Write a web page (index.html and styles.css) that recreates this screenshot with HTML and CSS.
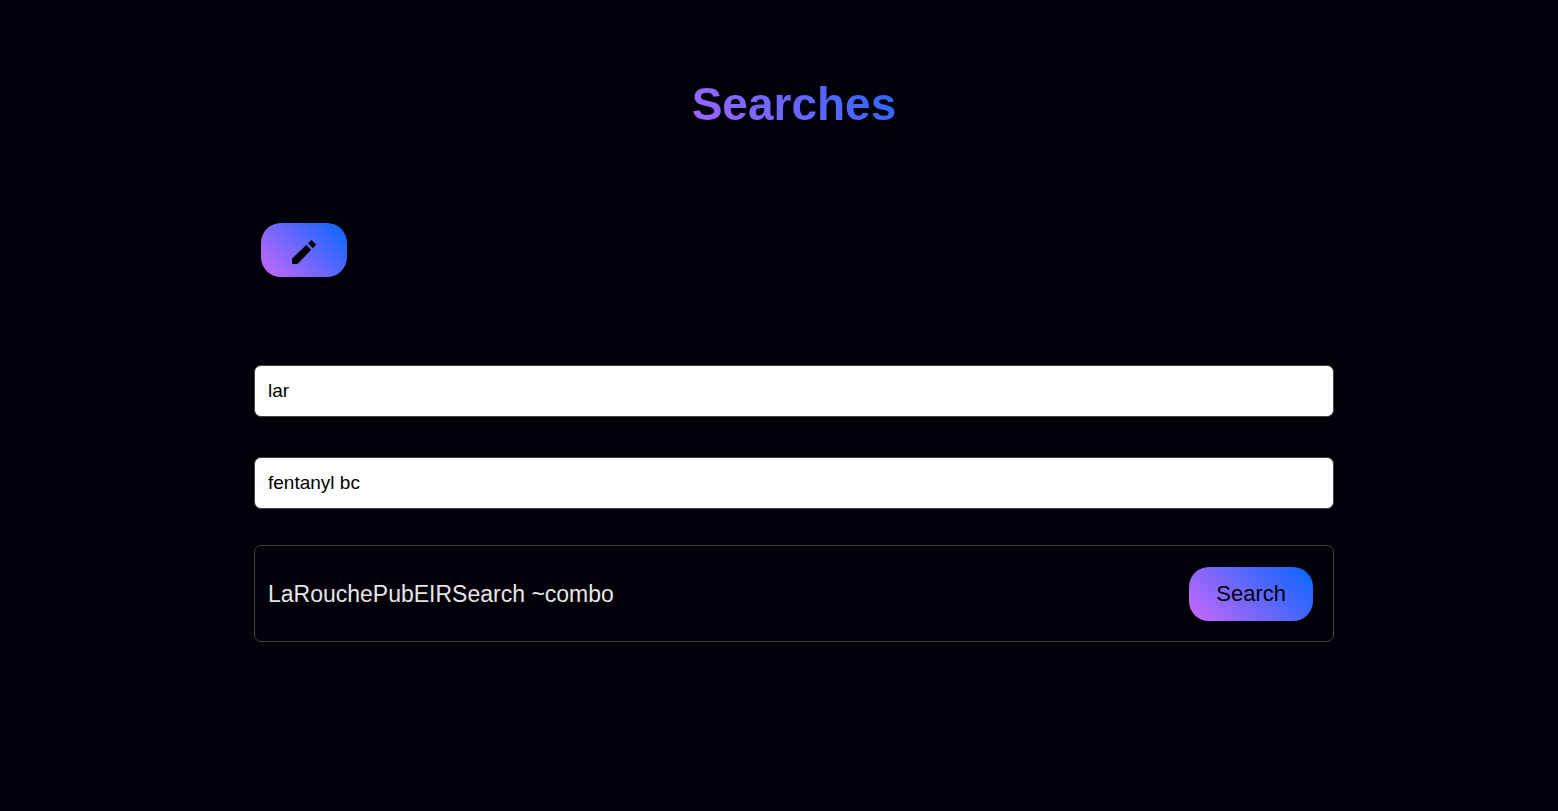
FILE: index.html
```
<!DOCTYPE html>
<html lang="en">
<head>
  <meta charset="UTF-8">
  <meta name="viewport" content="width=device-width, initial-scale=1">
  <title>Searches</title>
  <link rel="stylesheet" href="styles.css">
</head>
<body>
  <main class="container">
    <h1>Searches</h1>

    <div class="toolbar">
      <button type="button" class="btn btn-edit" id="editBtn" aria-label="Edit searches">
        <svg class="icon" viewBox="0 0 24 24" aria-hidden="true">
          <path d="M0 24V18.800L14.200 4.900l4.900 4.900L5.500 24zM16 3.400L18.500.8q.9-.9 1.800 0l3 3q.9.900 0 1.800L20.800 8.200z"/>
        </svg>
      </button>
    </div>

    <form class="search-form" id="searchForm">
      <input type="text" class="field" id="filter" value="lar" aria-label="Filter searches" autocomplete="off">
      <input type="text" class="field" id="query" value="fentanyl bc" aria-label="Search query" autocomplete="off">

      <div class="search-item">
        <span class="search-name">LaRouchePubEIRSearch ~combo</span>
        <button type="submit" class="btn">Search</button>
      </div>
    </form>
  </main>

  <script>
    document.getElementById('searchForm').addEventListener('submit', function(e) {
      e.preventDefault();
    });
  </script>
</body>
</html>
```
FILE: styles.css
```
* { box-sizing: border-box; }

body {
  margin: 0;
  padding: 78px 0 40px 30px;
  background: #020009;
  color: #e6e6e6;
  font-family: Arial, "Liberation Sans", sans-serif;
}

.container {
  width: 100%;
  max-width: 1080px;
  margin: 0 auto;
}

h1 {
  width: fit-content;
  margin: 0 auto;
  padding: 0 20px;
  font-size: 46px;
  line-height: 52px;
  font-weight: 700;
  background: linear-gradient(45deg, #b066ff, #1a66ff);
  -webkit-background-clip: text;
  background-clip: text;
  color: transparent;
}

.toolbar {
  margin: 93px 0 88px;
  padding: 0 7px;
}

.btn {
  display: flex;
  align-items: center;
  justify-content: center;
  height: 54px;
  padding: 0 27px;
  border: none;
  border-radius: 20px;
  background: linear-gradient(45deg, #cb68fa, #0466ff);
  color: #020009;
  font-family: inherit;
  font-size: 22px;
  cursor: pointer;
}

.btn:hover {
  opacity: 0.9;
}

.btn-edit {
  width: 86px;
}

.icon {
  width: 24px;
  height: 24px;
  margin-top: 4px;
  fill: #000;
}

.field {
  display: block;
  width: 100%;
  height: 52px;
  margin-bottom: 40px;
  padding: 0 13px;
  border: 1px solid #444;
  border-radius: 7px;
  background: #fff;
  color: #000;
  font-family: inherit;
  font-size: 19px;
}

.search-item {
  display: flex;
  align-items: center;
  justify-content: space-between;
  margin-top: -4px;
  padding: 21px 20px 20px 13px;
  border: 1px solid #444;
  border-radius: 7px;
}

.search-name {
  font-size: 23px;
}
```
